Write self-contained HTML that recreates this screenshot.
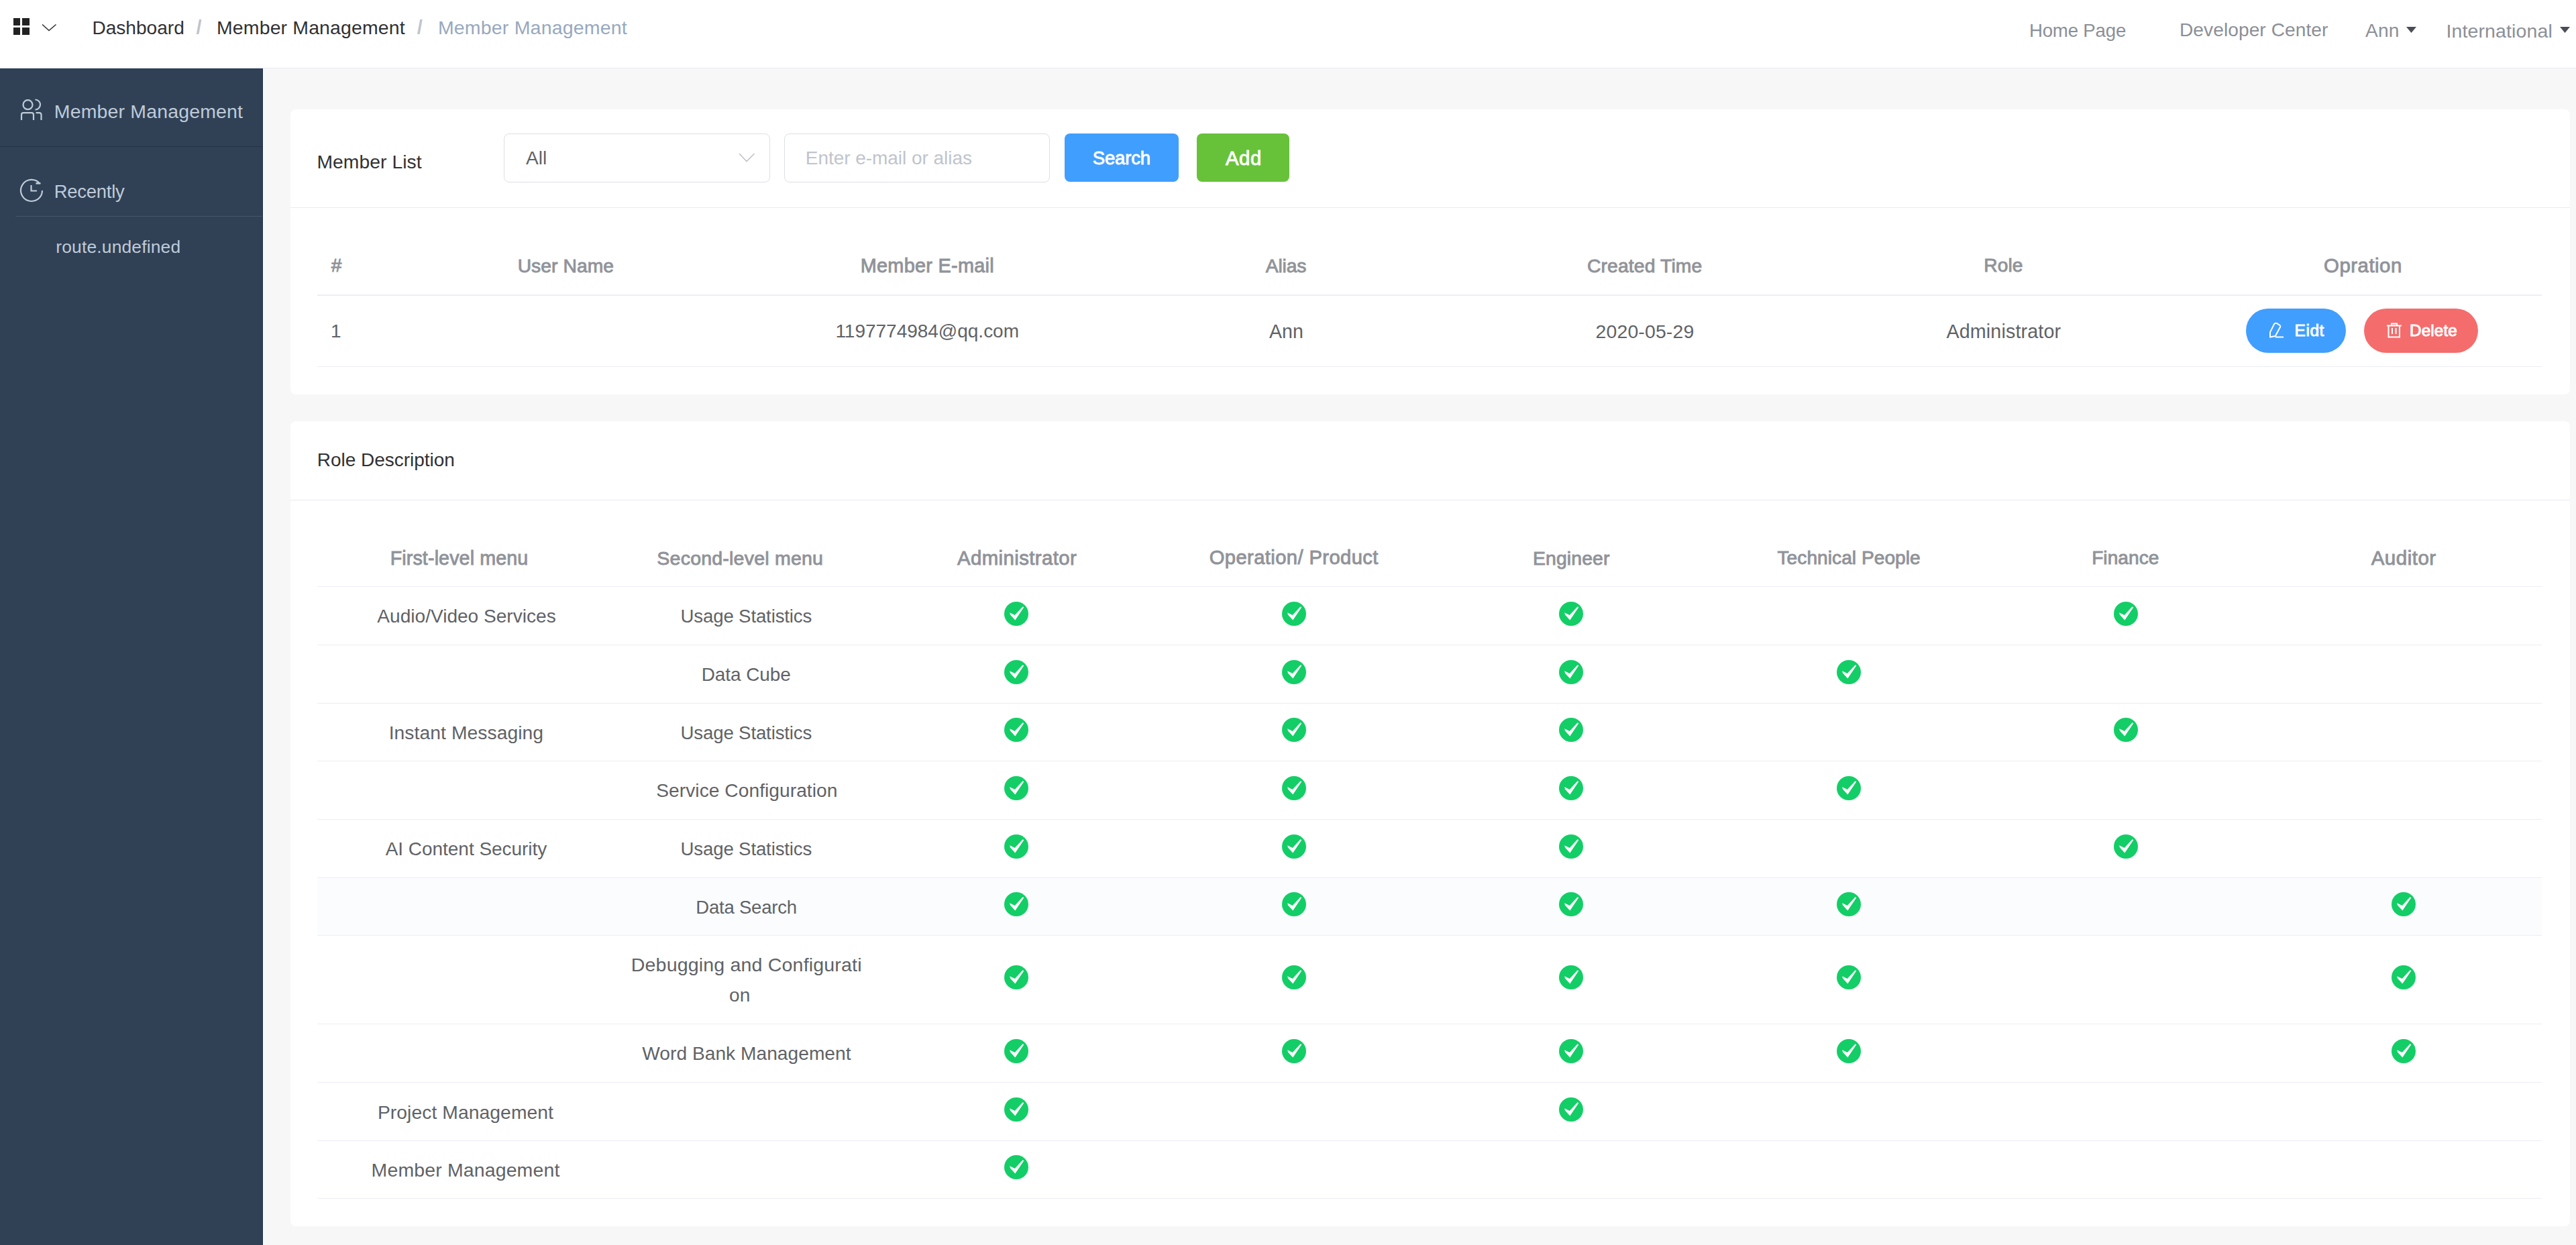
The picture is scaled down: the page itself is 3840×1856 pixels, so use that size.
<!DOCTYPE html>
<html><head><meta charset="utf-8"><title>Member Management</title>
<style>
html,body{margin:0;padding:0;}
body{width:3840px;height:1856px;position:relative;overflow:hidden;background:#f7f7f7;font-family:"Liberation Sans", sans-serif;}
.r{position:absolute;}
.t{position:absolute;white-space:nowrap;}
</style></head><body>
<script>(function(){try{if(Math.abs(window.innerWidth-1920)<3&&window.devicePixelRatio>=1.9){document.documentElement.style.zoom='0.5';}}catch(e){}})();</script>
<div class="r" style="left:0px;top:0px;width:3840px;height:101px;background:#ffffff;"></div>
<div class="r" style="left:0px;top:101px;width:3840px;height:1px;background:#f3f5fa;"></div>
<div class="r" style="left:392px;top:101px;width:3448px;height:1px;background:#e8ebf3;"></div>
<div class="r" style="left:393px;top:102px;width:3447px;height:1754px;background:#f7f7f7;"></div>
<div class="r" style="left:392px;top:102px;width:1px;height:1754px;background:#ffffff;"></div>
<div class="r" style="left:0px;top:102px;width:392px;height:1754px;background:#304156;"></div>
<div class="r" style="left:391px;top:102px;width:1px;height:1754px;background:#22334b;"></div>
<div class="r" style="left:0px;top:102px;width:392px;height:1px;background:#22334b;"></div>
<div class="r" style="left:0px;top:218px;width:391px;height:1px;background:#263445;"></div>
<div class="r" style="left:23px;top:322px;width:368px;height:1px;background:#465468;"></div>
<div class="r" style="left:433px;top:163px;width:3398px;height:425px;background:#ffffff;border-radius:8px"></div>
<div class="r" style="left:433px;top:628px;width:3398px;height:1200px;background:#ffffff;border-radius:8px"></div>
<div class="r" style="left:433px;top:309px;width:3398px;height:1px;background:#e8ebf3;"></div>
<div class="r" style="left:433px;top:745px;width:3398px;height:1px;background:#e8ebf3;"></div>
<div class="r" style="left:751px;top:199px;width:397px;height:73px;background:#ffffff;border:1.5px solid #dcdfe6;border-radius:8px;box-sizing:border-box"></div>
<div class="r" style="left:1169px;top:199px;width:396px;height:73px;background:#ffffff;border:1.5px solid #dcdfe6;border-radius:8px;box-sizing:border-box"></div>
<div class="r" style="left:1587px;top:199px;width:170px;height:72px;background:#409eff;border-radius:8px"></div>
<div class="r" style="left:1784px;top:199px;width:138px;height:72px;background:#67c23a;border-radius:8px"></div>
<div class="r" style="left:473px;top:439px;width:3316px;height:2px;background:#ebeef5;"></div>
<div class="r" style="left:473px;top:546px;width:3316px;height:1px;background:#ebeef5;"></div>
<div class="r" style="left:3348px;top:460px;width:149px;height:66px;background:#409eff;border-radius:33px"></div>
<div class="r" style="left:3524px;top:460px;width:170px;height:66px;background:#f56c6c;border-radius:33px"></div>
<div class="r" style="left:473px;top:1309px;width:3316px;height:85px;background:#fafcfe;"></div>
<div class="r" style="left:473px;top:874px;width:3316px;height:1px;background:#ebeef5;"></div>
<div class="r" style="left:473px;top:961px;width:3316px;height:1px;background:#ebeef5;"></div>
<div class="r" style="left:473px;top:1048px;width:3316px;height:1px;background:#ebeef5;"></div>
<div class="r" style="left:473px;top:1134px;width:3316px;height:1px;background:#ebeef5;"></div>
<div class="r" style="left:473px;top:1221px;width:3316px;height:1px;background:#ebeef5;"></div>
<div class="r" style="left:473px;top:1308px;width:3316px;height:1px;background:#ebeef5;"></div>
<div class="r" style="left:473px;top:1394px;width:3316px;height:1px;background:#ebeef5;"></div>
<div class="r" style="left:473px;top:1526px;width:3316px;height:1px;background:#ebeef5;"></div>
<div class="r" style="left:473px;top:1613px;width:3316px;height:1px;background:#ebeef5;"></div>
<div class="r" style="left:473px;top:1700px;width:3316px;height:1px;background:#ebeef5;"></div>
<div class="r" style="left:473px;top:1786px;width:3316px;height:1px;background:#ebeef5;"></div>
<svg class="r" style="left:0px;top:0px" width="100" height="100" viewBox="0 0 100 100"><rect x="20" y="27" width="10" height="11" fill="#222"/><rect x="33" y="27" width="11" height="11" fill="#222"/><rect x="20" y="41" width="10" height="11" fill="#222"/><rect x="33" y="41" width="11" height="11" fill="#222"/><polyline points="63,36.5 73,45.5 83.5,36.5" fill="none" stroke="#333" stroke-width="1.6"/></svg>
<svg class="r" style="left:3580px;top:30px" width="260" height="30" viewBox="0 0 260 30"><polygon points="7,10 22,10 14.5,19" fill="#4a4d55"/><polygon points="236,10 251,10 243.5,19" fill="#4a4d55"/></svg>
<svg class="r" style="left:20px;top:140px" width="60" height="50" viewBox="0 0 60 50"><g fill="none" stroke="#bfcbd9" stroke-width="2.2"><circle cx="21.5" cy="16.2" r="7"/><path d="M32.5 8.5 A7.5 7.5 0 0 1 32.5 23.5"/><path d="M12 39 V31 Q12 28.2 15 28.2 H27 Q30 28.2 30 31 V39"/><path d="M33.5 28.2 H38.5 Q41.5 28.2 41.5 31 V39"/></g></svg>
<svg class="r" style="left:20px;top:255px" width="60" height="55" viewBox="0 0 60 55"><g fill="none" stroke="#bfcbd9" stroke-width="2.2"><path d="M43 29 A16 16 0 1 1 39.3 18.7"/><path d="M33.5 18.3 H40.5" stroke-width="2.6"/><path d="M26.5 21 V29.5 H35"/></g></svg>
<svg class="r" style="left:1095px;top:220px" width="40" height="30" viewBox="0 0 40 30"><polyline points="7,9 18,20.5 29.5,9" fill="none" stroke="#c0c4cc" stroke-width="1.7"/></svg>
<svg class="r" style="left:3375px;top:475px" width="35" height="35" viewBox="0 0 35 35"><g fill="none" stroke="#fff" stroke-width="2"><path d="M15 8.2 Q16.6 6 18.8 7 L23.6 10 Q24.8 10.9 24.2 12.2 L16.8 26 L9 27.5 L9 20.3 Z"/><path d="M17 27.5 H29"/></g></svg>
<svg class="r" style="left:3550px;top:475px" width="35" height="35" viewBox="0 0 35 35"><g fill="none" stroke="#fff" stroke-width="2"><path d="M8 10.5 H30"/><path d="M15 10.5 V7.5 H23 V10.5"/><path d="M10.5 10.5 V27.5 H27 V10.5"/><path d="M16 14 V23"/><path d="M21.5 14 V23"/></g></svg>
<svg class="r" style="left:1495.4px;top:894.5px" width="40" height="40" viewBox="0 0 40 40"><circle cx="20" cy="20" r="18" fill="#13ce66"/><polygon points="10.2,18.3 17.8,22 29.6,9.3 31.3,10.3 18.3,29.5 11,21.6" fill="#fff"/></svg>
<svg class="r" style="left:1908.5px;top:894.5px" width="40" height="40" viewBox="0 0 40 40"><circle cx="20" cy="20" r="18" fill="#13ce66"/><polygon points="10.2,18.3 17.8,22 29.6,9.3 31.3,10.3 18.3,29.5 11,21.6" fill="#fff"/></svg>
<svg class="r" style="left:2322px;top:894.5px" width="40" height="40" viewBox="0 0 40 40"><circle cx="20" cy="20" r="18" fill="#13ce66"/><polygon points="10.2,18.3 17.8,22 29.6,9.3 31.3,10.3 18.3,29.5 11,21.6" fill="#fff"/></svg>
<svg class="r" style="left:3149px;top:894.5px" width="40" height="40" viewBox="0 0 40 40"><circle cx="20" cy="20" r="18" fill="#13ce66"/><polygon points="10.2,18.3 17.8,22 29.6,9.3 31.3,10.3 18.3,29.5 11,21.6" fill="#fff"/></svg>
<svg class="r" style="left:1495.4px;top:981.5px" width="40" height="40" viewBox="0 0 40 40"><circle cx="20" cy="20" r="18" fill="#13ce66"/><polygon points="10.2,18.3 17.8,22 29.6,9.3 31.3,10.3 18.3,29.5 11,21.6" fill="#fff"/></svg>
<svg class="r" style="left:1908.5px;top:981.5px" width="40" height="40" viewBox="0 0 40 40"><circle cx="20" cy="20" r="18" fill="#13ce66"/><polygon points="10.2,18.3 17.8,22 29.6,9.3 31.3,10.3 18.3,29.5 11,21.6" fill="#fff"/></svg>
<svg class="r" style="left:2322px;top:981.5px" width="40" height="40" viewBox="0 0 40 40"><circle cx="20" cy="20" r="18" fill="#13ce66"/><polygon points="10.2,18.3 17.8,22 29.6,9.3 31.3,10.3 18.3,29.5 11,21.6" fill="#fff"/></svg>
<svg class="r" style="left:2735.7px;top:981.5px" width="40" height="40" viewBox="0 0 40 40"><circle cx="20" cy="20" r="18" fill="#13ce66"/><polygon points="10.2,18.3 17.8,22 29.6,9.3 31.3,10.3 18.3,29.5 11,21.6" fill="#fff"/></svg>
<svg class="r" style="left:1495.4px;top:1068.0px" width="40" height="40" viewBox="0 0 40 40"><circle cx="20" cy="20" r="18" fill="#13ce66"/><polygon points="10.2,18.3 17.8,22 29.6,9.3 31.3,10.3 18.3,29.5 11,21.6" fill="#fff"/></svg>
<svg class="r" style="left:1908.5px;top:1068.0px" width="40" height="40" viewBox="0 0 40 40"><circle cx="20" cy="20" r="18" fill="#13ce66"/><polygon points="10.2,18.3 17.8,22 29.6,9.3 31.3,10.3 18.3,29.5 11,21.6" fill="#fff"/></svg>
<svg class="r" style="left:2322px;top:1068.0px" width="40" height="40" viewBox="0 0 40 40"><circle cx="20" cy="20" r="18" fill="#13ce66"/><polygon points="10.2,18.3 17.8,22 29.6,9.3 31.3,10.3 18.3,29.5 11,21.6" fill="#fff"/></svg>
<svg class="r" style="left:3149px;top:1068.0px" width="40" height="40" viewBox="0 0 40 40"><circle cx="20" cy="20" r="18" fill="#13ce66"/><polygon points="10.2,18.3 17.8,22 29.6,9.3 31.3,10.3 18.3,29.5 11,21.6" fill="#fff"/></svg>
<svg class="r" style="left:1495.4px;top:1154.5px" width="40" height="40" viewBox="0 0 40 40"><circle cx="20" cy="20" r="18" fill="#13ce66"/><polygon points="10.2,18.3 17.8,22 29.6,9.3 31.3,10.3 18.3,29.5 11,21.6" fill="#fff"/></svg>
<svg class="r" style="left:1908.5px;top:1154.5px" width="40" height="40" viewBox="0 0 40 40"><circle cx="20" cy="20" r="18" fill="#13ce66"/><polygon points="10.2,18.3 17.8,22 29.6,9.3 31.3,10.3 18.3,29.5 11,21.6" fill="#fff"/></svg>
<svg class="r" style="left:2322px;top:1154.5px" width="40" height="40" viewBox="0 0 40 40"><circle cx="20" cy="20" r="18" fill="#13ce66"/><polygon points="10.2,18.3 17.8,22 29.6,9.3 31.3,10.3 18.3,29.5 11,21.6" fill="#fff"/></svg>
<svg class="r" style="left:2735.7px;top:1154.5px" width="40" height="40" viewBox="0 0 40 40"><circle cx="20" cy="20" r="18" fill="#13ce66"/><polygon points="10.2,18.3 17.8,22 29.6,9.3 31.3,10.3 18.3,29.5 11,21.6" fill="#fff"/></svg>
<svg class="r" style="left:1495.4px;top:1241.5px" width="40" height="40" viewBox="0 0 40 40"><circle cx="20" cy="20" r="18" fill="#13ce66"/><polygon points="10.2,18.3 17.8,22 29.6,9.3 31.3,10.3 18.3,29.5 11,21.6" fill="#fff"/></svg>
<svg class="r" style="left:1908.5px;top:1241.5px" width="40" height="40" viewBox="0 0 40 40"><circle cx="20" cy="20" r="18" fill="#13ce66"/><polygon points="10.2,18.3 17.8,22 29.6,9.3 31.3,10.3 18.3,29.5 11,21.6" fill="#fff"/></svg>
<svg class="r" style="left:2322px;top:1241.5px" width="40" height="40" viewBox="0 0 40 40"><circle cx="20" cy="20" r="18" fill="#13ce66"/><polygon points="10.2,18.3 17.8,22 29.6,9.3 31.3,10.3 18.3,29.5 11,21.6" fill="#fff"/></svg>
<svg class="r" style="left:3149px;top:1241.5px" width="40" height="40" viewBox="0 0 40 40"><circle cx="20" cy="20" r="18" fill="#13ce66"/><polygon points="10.2,18.3 17.8,22 29.6,9.3 31.3,10.3 18.3,29.5 11,21.6" fill="#fff"/></svg>
<svg class="r" style="left:1495.4px;top:1328.0px" width="40" height="40" viewBox="0 0 40 40"><circle cx="20" cy="20" r="18" fill="#13ce66"/><polygon points="10.2,18.3 17.8,22 29.6,9.3 31.3,10.3 18.3,29.5 11,21.6" fill="#fff"/></svg>
<svg class="r" style="left:1908.5px;top:1328.0px" width="40" height="40" viewBox="0 0 40 40"><circle cx="20" cy="20" r="18" fill="#13ce66"/><polygon points="10.2,18.3 17.8,22 29.6,9.3 31.3,10.3 18.3,29.5 11,21.6" fill="#fff"/></svg>
<svg class="r" style="left:2322px;top:1328.0px" width="40" height="40" viewBox="0 0 40 40"><circle cx="20" cy="20" r="18" fill="#13ce66"/><polygon points="10.2,18.3 17.8,22 29.6,9.3 31.3,10.3 18.3,29.5 11,21.6" fill="#fff"/></svg>
<svg class="r" style="left:2735.7px;top:1328.0px" width="40" height="40" viewBox="0 0 40 40"><circle cx="20" cy="20" r="18" fill="#13ce66"/><polygon points="10.2,18.3 17.8,22 29.6,9.3 31.3,10.3 18.3,29.5 11,21.6" fill="#fff"/></svg>
<svg class="r" style="left:3562.5px;top:1328.0px" width="40" height="40" viewBox="0 0 40 40"><circle cx="20" cy="20" r="18" fill="#13ce66"/><polygon points="10.2,18.3 17.8,22 29.6,9.3 31.3,10.3 18.3,29.5 11,21.6" fill="#fff"/></svg>
<svg class="r" style="left:1495.4px;top:1437.0px" width="40" height="40" viewBox="0 0 40 40"><circle cx="20" cy="20" r="18" fill="#13ce66"/><polygon points="10.2,18.3 17.8,22 29.6,9.3 31.3,10.3 18.3,29.5 11,21.6" fill="#fff"/></svg>
<svg class="r" style="left:1908.5px;top:1437.0px" width="40" height="40" viewBox="0 0 40 40"><circle cx="20" cy="20" r="18" fill="#13ce66"/><polygon points="10.2,18.3 17.8,22 29.6,9.3 31.3,10.3 18.3,29.5 11,21.6" fill="#fff"/></svg>
<svg class="r" style="left:2322px;top:1437.0px" width="40" height="40" viewBox="0 0 40 40"><circle cx="20" cy="20" r="18" fill="#13ce66"/><polygon points="10.2,18.3 17.8,22 29.6,9.3 31.3,10.3 18.3,29.5 11,21.6" fill="#fff"/></svg>
<svg class="r" style="left:2735.7px;top:1437.0px" width="40" height="40" viewBox="0 0 40 40"><circle cx="20" cy="20" r="18" fill="#13ce66"/><polygon points="10.2,18.3 17.8,22 29.6,9.3 31.3,10.3 18.3,29.5 11,21.6" fill="#fff"/></svg>
<svg class="r" style="left:3562.5px;top:1437.0px" width="40" height="40" viewBox="0 0 40 40"><circle cx="20" cy="20" r="18" fill="#13ce66"/><polygon points="10.2,18.3 17.8,22 29.6,9.3 31.3,10.3 18.3,29.5 11,21.6" fill="#fff"/></svg>
<svg class="r" style="left:1495.4px;top:1546.5px" width="40" height="40" viewBox="0 0 40 40"><circle cx="20" cy="20" r="18" fill="#13ce66"/><polygon points="10.2,18.3 17.8,22 29.6,9.3 31.3,10.3 18.3,29.5 11,21.6" fill="#fff"/></svg>
<svg class="r" style="left:1908.5px;top:1546.5px" width="40" height="40" viewBox="0 0 40 40"><circle cx="20" cy="20" r="18" fill="#13ce66"/><polygon points="10.2,18.3 17.8,22 29.6,9.3 31.3,10.3 18.3,29.5 11,21.6" fill="#fff"/></svg>
<svg class="r" style="left:2322px;top:1546.5px" width="40" height="40" viewBox="0 0 40 40"><circle cx="20" cy="20" r="18" fill="#13ce66"/><polygon points="10.2,18.3 17.8,22 29.6,9.3 31.3,10.3 18.3,29.5 11,21.6" fill="#fff"/></svg>
<svg class="r" style="left:2735.7px;top:1546.5px" width="40" height="40" viewBox="0 0 40 40"><circle cx="20" cy="20" r="18" fill="#13ce66"/><polygon points="10.2,18.3 17.8,22 29.6,9.3 31.3,10.3 18.3,29.5 11,21.6" fill="#fff"/></svg>
<svg class="r" style="left:3562.5px;top:1546.5px" width="40" height="40" viewBox="0 0 40 40"><circle cx="20" cy="20" r="18" fill="#13ce66"/><polygon points="10.2,18.3 17.8,22 29.6,9.3 31.3,10.3 18.3,29.5 11,21.6" fill="#fff"/></svg>
<svg class="r" style="left:1495.4px;top:1633.5px" width="40" height="40" viewBox="0 0 40 40"><circle cx="20" cy="20" r="18" fill="#13ce66"/><polygon points="10.2,18.3 17.8,22 29.6,9.3 31.3,10.3 18.3,29.5 11,21.6" fill="#fff"/></svg>
<svg class="r" style="left:2322px;top:1633.5px" width="40" height="40" viewBox="0 0 40 40"><circle cx="20" cy="20" r="18" fill="#13ce66"/><polygon points="10.2,18.3 17.8,22 29.6,9.3 31.3,10.3 18.3,29.5 11,21.6" fill="#fff"/></svg>
<svg class="r" style="left:1495.4px;top:1720.0px" width="40" height="40" viewBox="0 0 40 40"><circle cx="20" cy="20" r="18" fill="#13ce66"/><polygon points="10.2,18.3 17.8,22 29.6,9.3 31.3,10.3 18.3,29.5 11,21.6" fill="#fff"/></svg>
<div class="t" style="left:137.40px;top:27.66px;font-size:28.05px;line-height:28.05px;color:#303133;letter-spacing:0.024px">Dashboard</div>
<div class="t" style="left:292.60px;top:26.85px;font-size:29px;line-height:29px;color:#c0c4cc;font-weight:bold">/</div>
<div class="t" style="left:323.00px;top:27.35px;font-size:28.41px;line-height:28.41px;color:#303133;letter-spacing:0.176px">Member Management</div>
<div class="t" style="left:621.70px;top:26.85px;font-size:29px;line-height:29px;color:#c0c4cc;font-weight:bold">/</div>
<div class="t" style="left:652.90px;top:27.29px;font-size:28.48px;line-height:28.48px;color:#97a8be;letter-spacing:0.208px">Member Management</div>
<div class="t" style="left:3024.90px;top:31.91px;font-size:27.63px;line-height:27.63px;color:#8b8f97;letter-spacing:-0.177px">Home Page</div>
<div class="t" style="left:3249.00px;top:31.48px;font-size:28.14px;line-height:28.14px;color:#8b8f97;letter-spacing:0.063px">Developer Center</div>
<div class="t" style="left:3526.00px;top:32.06px;font-size:28.16px;line-height:28.16px;color:#8b8f97;letter-spacing:0.130px">Ann</div>
<div class="t" style="left:3646.40px;top:31.81px;font-size:28.46px;line-height:28.46px;color:#8b8f97;letter-spacing:0.143px">International</div>
<div class="t" style="left:80.80px;top:152.23px;font-size:28.43px;line-height:28.43px;color:#bfcbd9;letter-spacing:0.192px">Member Management</div>
<div class="t" style="left:80.80px;top:272.20px;font-size:27.41px;line-height:27.41px;color:#bfcbd9;letter-spacing:-0.246px">Recently</div>
<div class="t" style="left:83.30px;top:355.24px;font-size:26.42px;line-height:26.42px;color:#bfcbd9;letter-spacing:0.161px">route.undefined</div>
<div class="t" style="left:472.40px;top:226.89px;font-size:28.24px;line-height:28.24px;color:#303133;letter-spacing:0.091px">Member List</div>
<div class="t" style="left:784.00px;top:222.30px;font-size:28px;line-height:28px;color:#606266">All</div>
<div class="t" style="left:1200.80px;top:222.34px;font-size:27.95px;line-height:27.95px;color:#c0c4cc;letter-spacing:-0.013px">Enter e-mail or alias</div>
<div class="t" style="left:1628.80px;top:222.47px;font-size:27.56px;line-height:27.56px;color:#ffffff;-webkit-text-stroke:0.9px #ffffff;letter-spacing:-0.212px">Search</div>
<div class="t" style="left:1827.00px;top:221.01px;font-size:29.29px;line-height:29.29px;color:#ffffff;-webkit-text-stroke:0.9px #ffffff;letter-spacing:0.592px">Add</div>
<div class="t" style="left:493.80px;top:382.30px;font-size:28px;line-height:28px;color:#909399;-webkit-text-stroke:0.9px #909399">#</div>
<div class="t" style="left:771.65px;top:382.13px;font-size:28.2px;line-height:28.2px;color:#909399;-webkit-text-stroke:0.9px #909399;letter-spacing:0.105px">User Name</div>
<div class="t" style="left:1282.70px;top:381.62px;font-size:28.8px;line-height:28.8px;color:#909399;-webkit-text-stroke:0.9px #909399;letter-spacing:0.316px">Member E-mail</div>
<div class="t" style="left:1886.70px;top:382.08px;font-size:28.26px;line-height:28.26px;color:#909399;-webkit-text-stroke:0.9px #909399;letter-spacing:-0.127px">Alias</div>
<div class="t" style="left:2365.95px;top:382.04px;font-size:28.31px;line-height:28.31px;color:#909399;-webkit-text-stroke:0.9px #909399;letter-spacing:0.134px">Created Time</div>
<div class="t" style="left:2957.25px;top:382.17px;font-size:28.15px;line-height:28.15px;color:#909399;-webkit-text-stroke:0.9px #909399;letter-spacing:0.092px">Role</div>
<div class="t" style="left:3464.10px;top:381.10px;font-size:29.42px;line-height:29.42px;color:#909399;-webkit-text-stroke:0.9px #909399;letter-spacing:0.481px">Opration</div>
<div class="t" style="left:493.00px;top:480.30px;font-size:28px;line-height:28px;color:#606266">1</div>
<div class="t" style="left:1245.40px;top:480.31px;font-size:27.98px;line-height:27.98px;color:#606266">1197774984@qq.com</div>
<div class="t" style="left:1892.05px;top:479.82px;font-size:28.57px;line-height:28.57px;color:#606266;letter-spacing:-0.018px">Ann</div>
<div class="t" style="left:2378.60px;top:479.98px;font-size:28.37px;line-height:28.37px;color:#606266;letter-spacing:0.167px">2020-05-29</div>
<div class="t" style="left:2901.45px;top:479.74px;font-size:28.66px;line-height:28.66px;color:#606266;letter-spacing:0.153px">Administrator</div>
<div class="t" style="left:3420.60px;top:481.09px;font-size:24.46px;line-height:24.46px;color:#ffffff;-webkit-text-stroke:0.9px #ffffff;letter-spacing:0.553px">Eidt</div>
<div class="t" style="left:3592.00px;top:481.26px;font-size:24.27px;line-height:24.27px;color:#ffffff;-webkit-text-stroke:0.9px #ffffff;letter-spacing:0.131px">Delete</div>
<div class="t" style="left:472.70px;top:672.11px;font-size:27.98px;line-height:27.98px;color:#303133">Role Description</div>
<div class="t" style="left:581.65px;top:817.78px;font-size:28.61px;line-height:28.61px;color:#909399;-webkit-text-stroke:0.9px #909399;letter-spacing:0.141px">First-level menu</div>
<div class="t" style="left:979.35px;top:817.85px;font-size:28.53px;line-height:28.53px;color:#909399;-webkit-text-stroke:0.9px #909399;letter-spacing:0.216px">Second-level menu</div>
<div class="t" style="left:1427.05px;top:817.17px;font-size:29.33px;line-height:29.33px;color:#909399;-webkit-text-stroke:0.9px #909399;letter-spacing:0.409px">Administrator</div>
<div class="t" style="left:1802.70px;top:817.32px;font-size:29.16px;line-height:29.16px;color:#909399;-webkit-text-stroke:0.9px #909399;letter-spacing:0.410px">Operation/ Product</div>
<div class="t" style="left:2285.00px;top:818.01px;font-size:28.34px;line-height:28.34px;color:#909399;-webkit-text-stroke:0.9px #909399;letter-spacing:0.148px">Engineer</div>
<div class="t" style="left:2649.50px;top:818.20px;font-size:28.12px;line-height:28.12px;color:#909399;-webkit-text-stroke:0.9px #909399;letter-spacing:0.047px">Technical People</div>
<div class="t" style="left:3118.15px;top:818.20px;font-size:28.11px;line-height:28.11px;color:#909399;-webkit-text-stroke:0.9px #909399;letter-spacing:0.055px">Finance</div>
<div class="t" style="left:3534.70px;top:817.00px;font-size:29.53px;line-height:29.53px;color:#909399;-webkit-text-stroke:0.9px #909399;letter-spacing:0.485px">Auditor</div>
<div class="t" style="left:562.35px;top:904.76px;font-size:28.04px;line-height:28.04px;color:#606266;letter-spacing:0.020px">Audio/Video Services</div>
<div class="t" style="left:1014.55px;top:905.15px;font-size:27.59px;line-height:27.59px;color:#606266;letter-spacing:-0.135px">Usage Statistics</div>
<div class="t" style="left:1045.75px;top:991.88px;font-size:27.9px;line-height:27.9px;color:#606266;letter-spacing:-0.041px">Data Cube</div>
<div class="t" style="left:579.65px;top:1078.10px;font-size:28.23px;line-height:28.23px;color:#606266;letter-spacing:0.086px">Instant Messaging</div>
<div class="t" style="left:1014.55px;top:1078.65px;font-size:27.59px;line-height:27.59px;color:#606266;letter-spacing:-0.135px">Usage Statistics</div>
<div class="t" style="left:978.30px;top:1164.68px;font-size:28.14px;line-height:28.14px;color:#606266;letter-spacing:0.058px">Service Configuration</div>
<div class="t" style="left:574.70px;top:1251.83px;font-size:27.96px;line-height:27.96px;color:#606266;letter-spacing:-0.014px">AI Content Security</div>
<div class="t" style="left:1014.55px;top:1252.15px;font-size:27.59px;line-height:27.59px;color:#606266;letter-spacing:-0.135px">Usage Statistics</div>
<div class="t" style="left:1037.30px;top:1338.74px;font-size:27.48px;line-height:27.48px;color:#606266;letter-spacing:-0.201px">Data Search</div>
<div class="t" style="left:940.80px;top:1423.75px;font-size:28.53px;line-height:28.53px;color:#606266;letter-spacing:0.186px">Debugging and Configurati</div>
<div class="t" style="left:1087.11px;top:1469.50px;font-size:28px;line-height:28px;color:#606266">on</div>
<div class="t" style="left:957.30px;top:1556.70px;font-size:28.11px;line-height:28.11px;color:#606266;letter-spacing:0.042px">Word Bank Management</div>
<div class="t" style="left:562.90px;top:1643.59px;font-size:28.24px;line-height:28.24px;color:#606266;letter-spacing:0.090px">Project Management</div>
<div class="t" style="left:553.60px;top:1729.95px;font-size:28.41px;line-height:28.41px;color:#606266;letter-spacing:0.176px">Member Management</div>
</body></html>
